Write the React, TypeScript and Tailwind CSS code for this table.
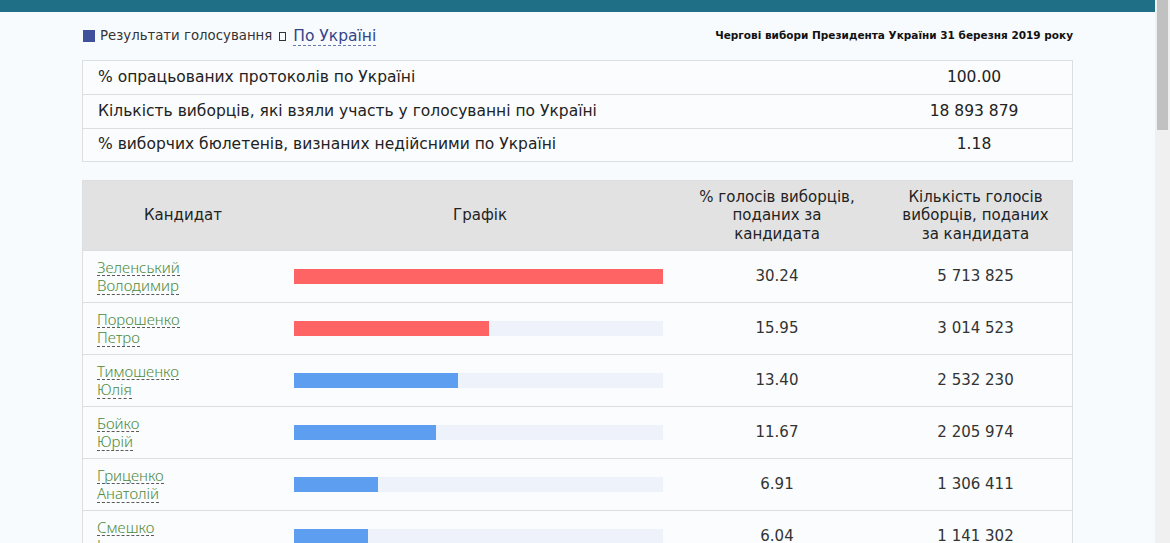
import React from "react";

const candidates = [
  { first: "Зеленський", last: "Володимир", pct: 30.24, votes: "5 713 825", red: true },
  { first: "Порошенко", last: "Петро", pct: 15.95, votes: "3 014 523", red: true },
  { first: "Тимошенко", last: "Юлія", pct: 13.4, votes: "2 532 230", red: false },
  { first: "Бойко", last: "Юрій", pct: 11.67, votes: "2 205 974", red: false },
  { first: "Гриценко", last: "Анатолій", pct: 6.91, votes: "1 306 411", red: false },
  { first: "Смешко", last: "Ігор", pct: 6.04, votes: "1 141 302", red: false },
];

const summary = [
  ["% опрацьованих протоколів по Україні", "100.00"],
  ["Кількість виборців, які взяли участь у голосуванні по Україні", "18 893 879"],
  ["% виборчих бюлетенів, визнаних недійсними по Україні", "1.18"],
];

const cols = "grid grid-cols-[200px_394px_200px_197px]";

const App = () => {
  const max = candidates[0].pct;
  return (
    <div className="flex h-[543px] overflow-hidden bg-[#f8fbfd] font-['DejaVu_Sans',sans-serif] text-[#222]">
      <div className="flex-1">
        <div className="h-[12px] bg-[#1f6f86]" />
        <div className="ml-[82px] w-[991px]">
          <div className="flex h-[48px] items-center justify-between">
            <div className="flex items-center text-[13.3px] text-[#333]">
              <span className="ml-px mr-[5px] inline-block h-[12px] w-[12px] bg-[#40509a]" />
              Результати голосування
              <span className="mx-[7px] inline-block h-[9px] w-[7px] border border-[#333]" />
              <span className="border-b border-dashed border-[#6a78b0] text-[15.5px] leading-[18px] text-[#33448a]">По Україні</span>
            </div>
            <div className="text-[10.5px] font-bold text-[#111]">Чергові вибори Президента України 31 березня 2019 року</div>
          </div>

          <div className="border border-[#dcdfe2] bg-[#fafcfd] text-[15.5px]">
            {summary.map(([label, value], i) => (
              <div key={i} className={`grid h-[33.4px] grid-cols-[793px_1fr] items-center ${i > 0 ? "border-t border-[#dcdfe2]" : ""}`}>
                <div className="pl-[15px]">{label}</div>
                <div className="text-center">{value}</div>
              </div>
            ))}
          </div>

          <div className="mt-[18px] border border-[#dcdfe2] bg-[#fafcfd]">
            <div className={`${cols} h-[69px] items-center bg-[#e2e2e2] text-center text-[15px] leading-[18.5px] text-[#222]`}>
              <div>Кандидат</div>
              <div>Графік</div>
              <div className="px-[16px]">% голосів виборців, поданих за кандидата</div>
              <div className="px-[18px]">Кількість голосів виборців, поданих за кандидата</div>
            </div>
            {candidates.map((c) => (
              <div key={c.first} className={`${cols} h-[52px] items-center border-t border-[#dcdfe2] text-[15px] text-[#333]`}>
                <div className="flex flex-col items-start gap-px pl-[14px] font-['Noto_Sans',sans-serif] text-[15px] font-light leading-[16.5px] text-[#4d8a3c]">
                  <span className="border-b border-dashed border-[#5a5a5a]">{c.first}</span>
                  <span className="border-b border-dashed border-[#5a5a5a]">{c.last}</span>
                </div>
                <div className="pl-[11px]">
                  <div className="h-[15px] w-[369px] bg-[#eef2fb]">
                    <div
                      className={`h-full ${c.red ? "bg-[#ff6464]" : "bg-[#5e9ef0]"}`}
                      style={{ width: `${(c.pct / max) * 100}%` }}
                    />
                  </div>
                </div>
                <div className="text-center">{c.pct.toFixed(2)}</div>
                <div className="text-center">{c.votes}</div>
              </div>
            ))}
          </div>
        </div>
      </div>
      <div className="flex w-[15px] flex-col bg-[#f0f0f0]">
        <div className="ml-[2px] h-[130px] w-[11px] bg-[#c1c1c1]" />
      </div>
    </div>
  );
};

export default App;
